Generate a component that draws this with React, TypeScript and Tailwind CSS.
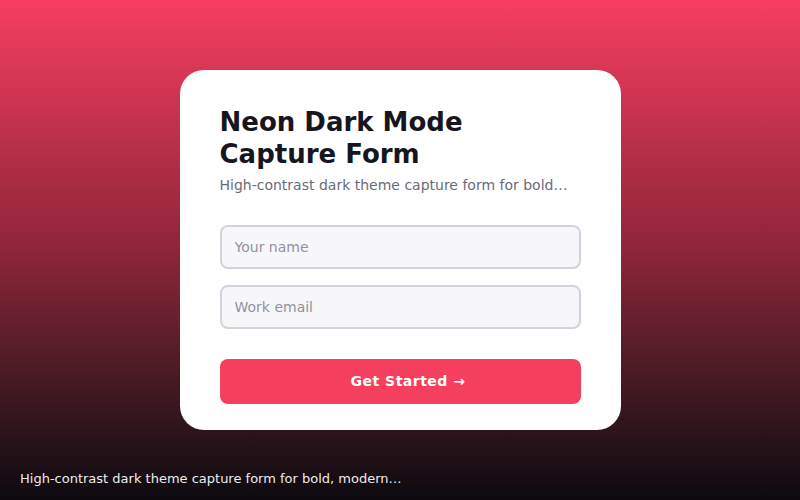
export default function App() {
  return (
    <div
      className="relative flex h-[500px] w-[800px] items-center justify-center bg-gradient-to-b from-[#f63f60] via-[#8e2539] to-[#0c0a0f]"
      style={{ fontFamily: '"DejaVu Sans", sans-serif' }}
    >
      {/* Capture card */}
      <div className="w-[441px] rounded-[24px] bg-white px-[40px] pb-[26px] pt-[36px]">
        <h1 className="text-[26px] font-bold leading-[32px] text-[#16161f]">
          Neon Dark Mode Capture Form
        </h1>
        <p className="mt-[5px] text-[14px] leading-[20px] text-[#6b6b76]">
          High-contrast dark theme capture form for bold…
        </p>

        <div className="mt-[30px] flex flex-col gap-[16px]">
          <input
            placeholder="Your name"
            className="h-[44px] w-full rounded-[8px] border-2 border-[#d3d3dd] bg-[#f7f7fa] px-[13px] text-[14px] text-[#16161f] outline-none placeholder:text-[#92929c]"
          />
          <input
            placeholder="Work email"
            className="h-[44px] w-full rounded-[8px] border-2 border-[#d3d3dd] bg-[#f7f7fa] px-[13px] text-[14px] text-[#16161f] outline-none placeholder:text-[#92929c]"
          />
        </div>

        <button className="mt-[30px] h-[45px] w-full rounded-[8px] bg-[#f43f5e] pl-[16px] text-[14px] font-bold tracking-[0.5px] text-white">
          Get Started →
        </button>
      </div>

      <p className="absolute bottom-[12px] left-[20px] text-[13px] text-[#ececf0]">
        High-contrast dark theme capture form for bold, modern…
      </p>
    </div>
  );
}
